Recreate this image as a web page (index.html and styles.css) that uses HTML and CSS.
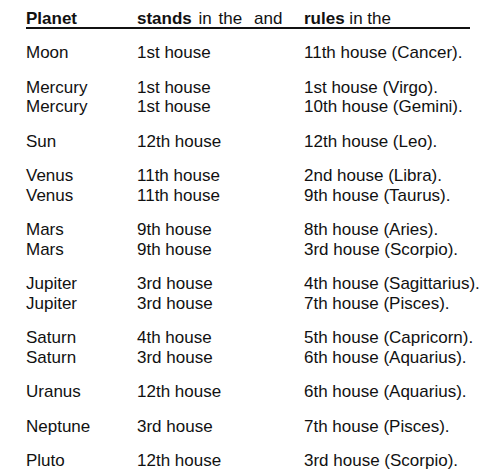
FILE: index.html
```html
<!DOCTYPE html>
<html>
<head>
<meta charset="utf-8">
<link rel="stylesheet" href="styles.css">
</head>
<body>
<div class="table">
  <div class="head">
    <div class="c1"><b>Planet</b></div>
    <div class="c2"><b>stands</b> in the<span class="and">and</span></div>
    <div class="c3"><b>rules</b> in the</div>
  </div>
  <div class="group">
    <div class="row"><div class="c1">Moon</div><div class="c2">1st house</div><div class="c3">11th house (Cancer).</div></div>
  </div>
  <div class="group">
    <div class="row"><div class="c1">Mercury</div><div class="c2">1st house</div><div class="c3">1st house (Virgo).</div></div>
    <div class="row"><div class="c1">Mercury</div><div class="c2">1st house</div><div class="c3">10th house (Gemini).</div></div>
  </div>
  <div class="group">
    <div class="row"><div class="c1">Sun</div><div class="c2">12th house</div><div class="c3">12th house (Leo).</div></div>
  </div>
  <div class="group">
    <div class="row"><div class="c1">Venus</div><div class="c2">11th house</div><div class="c3">2nd house (Libra).</div></div>
    <div class="row"><div class="c1">Venus</div><div class="c2">11th house</div><div class="c3">9th house (Taurus).</div></div>
  </div>
  <div class="group">
    <div class="row"><div class="c1">Mars</div><div class="c2">9th house</div><div class="c3">8th house (Aries).</div></div>
    <div class="row"><div class="c1">Mars</div><div class="c2">9th house</div><div class="c3">3rd house (Scorpio).</div></div>
  </div>
  <div class="group">
    <div class="row"><div class="c1">Jupiter</div><div class="c2">3rd house</div><div class="c3">4th house (Sagittarius).</div></div>
    <div class="row"><div class="c1">Jupiter</div><div class="c2">3rd house</div><div class="c3">7th house (Pisces).</div></div>
  </div>
  <div class="group">
    <div class="row"><div class="c1">Saturn</div><div class="c2">4th house</div><div class="c3">5th house (Capricorn).</div></div>
    <div class="row"><div class="c1">Saturn</div><div class="c2">3rd house</div><div class="c3">6th house (Aquarius).</div></div>
  </div>
  <div class="group">
    <div class="row"><div class="c1">Uranus</div><div class="c2">12th house</div><div class="c3">6th house (Aquarius).</div></div>
  </div>
  <div class="group">
    <div class="row"><div class="c1">Neptune</div><div class="c2">3rd house</div><div class="c3">7th house (Pisces).</div></div>
  </div>
  <div class="group">
    <div class="row"><div class="c1">Pluto</div><div class="c2">12th house</div><div class="c3">3rd house (Scorpio).</div></div>
  </div>
</div>
</body>
</html>
```
FILE: styles.css
```css
html, body {
  margin: 0;
  padding: 0;
  background: #ffffff;
}
body {
  font-family: "Liberation Sans", Arial, sans-serif;
  font-size: 17px;
  color: #111111;
}
.table {
  width: 444px;
  margin-left: 26px;
  padding-top: 9px;
  white-space: nowrap;
}
.head,
.row {
  display: grid;
  grid-template-columns: 111px 167px 166px;
  line-height: 19.5px;
}
.head {
  border-bottom: 2px solid #111111;
  margin-bottom: 14px;
  height: 18px;
}
.head b,
.row b {
  font-weight: 700;
}
.head .c2 {
  word-spacing: 2px;
}
.and {
  margin-left: 12px;
}
.group {
  margin-bottom: 15px;
}
```
